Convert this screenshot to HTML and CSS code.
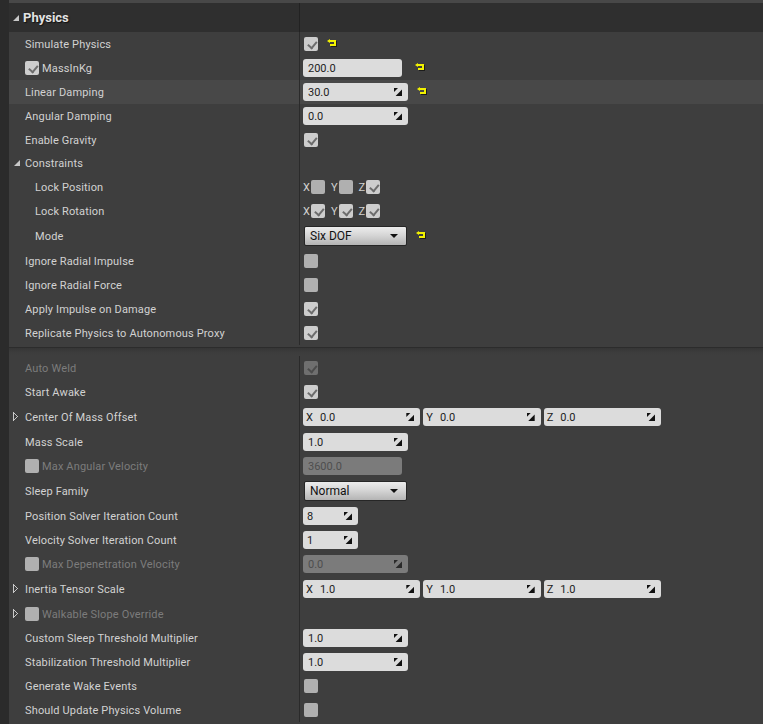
FILE: index.html
```html
<!DOCTYPE html>
<html lang="en">
<head>
    <meta charset="UTF-8">
    <title>Physics</title>
    <link rel="stylesheet" href="styles.css">
</head>
<body>
<div class="panel">
    <div class="topline"></div>
    <div class="row header">
        <div class="name"><span class="tri-down"></span>Physics</div>
        <div class="value"></div>
    </div>

    <div class="row">
        <div class="name">Simulate Physics</div>
        <div class="value"><span class="cb on"></span><span class="reset"></span></div>
    </div>
    <div class="row">
        <div class="name"><span class="cb on small"></span>MassInKg</div>
        <div class="value"><span class="field w99">200.0</span><span class="reset far"></span></div>
    </div>
    <div class="row hover">
        <div class="name">Linear Damping</div>
        <div class="value"><span class="field spin w105">30.0</span><span class="reset"></span></div>
    </div>
    <div class="row">
        <div class="name">Angular Damping</div>
        <div class="value"><span class="field spin w105">0.0</span></div>
    </div>
    <div class="row">
        <div class="name">Enable Gravity</div>
        <div class="value"><span class="cb on"></span></div>
    </div>
    <div class="row h23">
        <div class="name group"><span class="tri-down"></span>Constraints</div>
        <div class="value"></div>
    </div>
    <div class="row">
        <div class="name indent">Lock Position</div>
        <div class="value axes">
            <span class="ax">X</span><span class="cb"></span>
            <span class="ax">Y</span><span class="cb"></span>
            <span class="ax">Z</span><span class="cb on"></span>
        </div>
    </div>
    <div class="row">
        <div class="name indent">Lock Rotation</div>
        <div class="value axes">
            <span class="ax">X</span><span class="cb on"></span>
            <span class="ax">Y</span><span class="cb on"></span>
            <span class="ax">Z</span><span class="cb on"></span>
        </div>
    </div>
    <div class="row h26">
        <div class="name indent">Mode</div>
        <div class="value"><span class="combo">Six DOF</span><span class="reset"></span></div>
    </div>
    <div class="row">
        <div class="name">Ignore Radial Impulse</div>
        <div class="value"><span class="cb"></span></div>
    </div>
    <div class="row">
        <div class="name">Ignore Radial Force</div>
        <div class="value"><span class="cb"></span></div>
    </div>
    <div class="row">
        <div class="name">Apply Impulse on Damage</div>
        <div class="value"><span class="cb on"></span></div>
    </div>
    <div class="row">
        <div class="name">Replicate Physics to Autonomous Proxy</div>
        <div class="value"><span class="cb on"></span></div>
    </div>

    <div class="separator"></div>

    <div class="row">
        <div class="name off">Auto Weld</div>
        <div class="value"><span class="cb on dim"></span></div>
    </div>
    <div class="row">
        <div class="name">Start Awake</div>
        <div class="value"><span class="cb on"></span></div>
    </div>
    <div class="row h26">
        <div class="name"><span class="tri-right"></span>Center Of Mass Offset</div>
        <div class="value">
            <div class="vector">
                <span class="field spin"><b>X</b>0.0</span>
                <span class="field spin"><b>Y</b>0.0</span>
                <span class="field spin"><b>Z</b>0.0</span>
            </div>
        </div>
    </div>
    <div class="row">
        <div class="name">Mass Scale</div>
        <div class="value"><span class="field spin w105">1.0</span></div>
    </div>
    <div class="row">
        <div class="name off"><span class="cb small"></span>Max Angular Velocity</div>
        <div class="value"><span class="field w99 disabled">3600.0</span></div>
    </div>
    <div class="row h26">
        <div class="name">Sleep Family</div>
        <div class="value"><span class="combo">Normal</span></div>
    </div>
    <div class="row">
        <div class="name">Position Solver Iteration Count</div>
        <div class="value"><span class="field spin w55">8</span></div>
    </div>
    <div class="row">
        <div class="name">Velocity Solver Iteration Count</div>
        <div class="value"><span class="field spin w55">1</span></div>
    </div>
    <div class="row">
        <div class="name off"><span class="cb small"></span>Max Depenetration Velocity</div>
        <div class="value"><span class="field spin w105 disabled">0.0</span></div>
    </div>
    <div class="row h26">
        <div class="name"><span class="tri-right"></span>Inertia Tensor Scale</div>
        <div class="value">
            <div class="vector">
                <span class="field spin"><b>X</b>1.0</span>
                <span class="field spin"><b>Y</b>1.0</span>
                <span class="field spin"><b>Z</b>1.0</span>
            </div>
        </div>
    </div>
    <div class="row">
        <div class="name off"><span class="tri-right"></span><span class="cb small"></span>Walkable Slope Override</div>
        <div class="value"></div>
    </div>
    <div class="row">
        <div class="name">Custom Sleep Threshold Multiplier</div>
        <div class="value"><span class="field spin w105">1.0</span></div>
    </div>
    <div class="row">
        <div class="name">Stabilization Threshold Multiplier</div>
        <div class="value"><span class="field spin w105">1.0</span></div>
    </div>
    <div class="row">
        <div class="name">Generate Wake Events</div>
        <div class="value"><span class="cb"></span></div>
    </div>
    <div class="row">
        <div class="name">Should Update Physics Volume</div>
        <div class="value"><span class="cb"></span></div>
    </div>
</div>
</body>
</html>
```

FILE: styles.css
```css
html{
    height: 100%;
}
body{
    margin: 0;
    min-height: 100%;
    background-color: #2b2b2b;
    font-family: Roboto, "Liberation Sans", sans-serif;
    font-size: 11px;
    color: #d2d2d2;
    overflow: hidden;
}
.panel{
    margin-left: 9px;
    background-color: #3e3e3e;
    min-height: 724px;
}
.topline{
    height: 3px;
    background-color: #484848;
}
.row{
    display: flex;
    height: 24px;
}
.row.h23{
    height: 23px;
}
.row.h26{
    height: 26px;
}
.row.hover{
    background-color: #484848;
}
.name{
    width: 290px;
    flex: none;
    display: flex;
    align-items: center;
    padding-left: 16px;
    box-sizing: border-box;
    position: relative;
    white-space: nowrap;
    letter-spacing: 0.15px;
}
.name.indent{
    padding-left: 26px;
}
.name.off{
    color: #7c7c7c;
}
.value{
    flex: 1;
    display: flex;
    align-items: center;
    border-left: 1px solid #2a2a2a;
    padding-left: 3px;
}
.header{
    height: 29px;
    background-color: #2f2f2f;
}
.header .name{
    padding-left: 14px;
    font-size: 13px;
    font-weight: bold;
    color: #e2e2e2;
    letter-spacing: 0;
    text-shadow: 1px 1px 1px #111;
}
.header .value{
    border-left-color: #222;
}
.tri-down{
    position: absolute;
    left: 4px;
    top: 50%;
    margin-top: -3px;
    width: 0;
    height: 0;
    border-left: 6px solid transparent;
    border-bottom: 6px solid #c8c8c8;
}
.group .tri-down{
    left: 5px;
    margin-top: -4px;
}
.tri-right{
    position: absolute;
    left: 4px;
    top: 50%;
    margin-top: -5px;
    width: 5px;
    height: 9px;
    background:
        linear-gradient(to top right, transparent 44%, #c8c8c8 45%, #c8c8c8 56%, transparent 57%) 0 0 / 5px 5px no-repeat,
        linear-gradient(to bottom right, transparent 44%, #c8c8c8 45%, #c8c8c8 56%, transparent 57%) 0 4px / 5px 5px no-repeat,
        linear-gradient(#c8c8c8, #c8c8c8) 0 0 / 1px 9px no-repeat;
}

/* checkboxes */
.cb{
    display: inline-block;
    width: 14px;
    height: 14px;
    border-radius: 2px;
    background-color: #b0b0b0;
    margin-left: 1px;
    position: relative;
    flex: none;
}
.cb.on{
    background-color: #cdcdcd;
}
.cb.on::after{
    content: "";
    position: absolute;
    left: 3px;
    top: 2px;
    width: 7px;
    height: 4px;
    border-left: 2px solid #6c6c6c;
    border-bottom: 2px solid #6c6c6c;
    transform: rotate(-50deg) translate(-1px, 2px);
}
.cb.dim{
    background-color: #6f6f6f;
}
.cb.dim::after{
    border-color: #4c4c4c;
}
.cb.small{
    margin-left: 0;
    margin-right: 3px;
}
.name .cb{
    margin-left: 0;
}
.axes .ax{
    color: #d2d2d2;
    margin-right: 1px;
}
.axes .cb{
    margin-left: 0;
    margin-right: 6px;
}

/* reset-to-default arrow */
.reset{
    display: inline-block;
    width: 6px;
    height: 6px;
    margin-left: 12px;
    margin-top: -3px;
    border: 2px solid #f2f200;
    border-left: none;
    box-sizing: border-box;
    position: relative;
    box-shadow: 1px 1px 0 #1c1c1c;
}
.reset::before{
    content: "";
    position: absolute;
    left: -3px;
    top: -3px;
    border-top: 2px solid transparent;
    border-bottom: 2px solid transparent;
    border-right: 3px solid #f2f200;
}
.reset.far{
    margin-left: 16px;
}

/* number fields */
.field{
    display: inline-flex;
    align-items: center;
    height: 18px;
    box-sizing: border-box;
    padding-left: 5px;
    border-radius: 3px;
    background-color: #dcdcdc;
    color: #1c1c1c;
    font-size: 11px;
    position: relative;
}
.field.w99{
    width: 99px;
}
.field.w105{
    width: 105px;
}
.field.w55{
    width: 55px;
    padding-left: 4px;
}
.field.disabled{
    background-color: #7b7b7b;
    color: #4e4e4e;
}
.field.spin::before,
.field.spin::after{
    content: "";
    position: absolute;
    right: 6px;
    top: 5px;
    width: 8px;
    height: 8px;
    background-color: #111;
}
.field.spin::before{
    clip-path: polygon(0 0, 50% 0, 0 50%);
}
.field.spin::after{
    clip-path: polygon(100% 20%, 100% 100%, 20% 100%);
}
.field.disabled.spin::before,
.field.disabled.spin::after{
    background-color: #2a2a2a;
}
.vector{
    display: flex;
    gap: 3px;
    width: 358px;
}
.vector .field{
    flex: 1;
    padding-left: 3px;
}
.vector b{
    font-weight: normal;
    margin-right: 7px;
}

/* dropdowns */
.combo{
    display: inline-flex;
    align-items: center;
    width: 103px;
    height: 20px;
    box-sizing: border-box;
    padding-left: 5px;
    margin-left: 1px;
    border: 1px solid #262626;
    border-radius: 2px;
    background-image: linear-gradient(#ececec 0%, #d6d6d6 45%, #b4b4b4 100%);
    color: #111;
    font-size: 12px;
    position: relative;
}
.combo::after{
    content: "";
    position: absolute;
    right: 8px;
    top: 7px;
    border-left: 4px solid transparent;
    border-right: 4px solid transparent;
    border-top: 4px solid #111;
}

.separator{
    height: 11px;
    background-image: linear-gradient(#3e3e3e 0, #3e3e3e 2px, #2c2c2c 2px, #2c2c2c 3px, #363636 3px, #3c3c3c 7px, #3e3e3e 11px);
}
```
